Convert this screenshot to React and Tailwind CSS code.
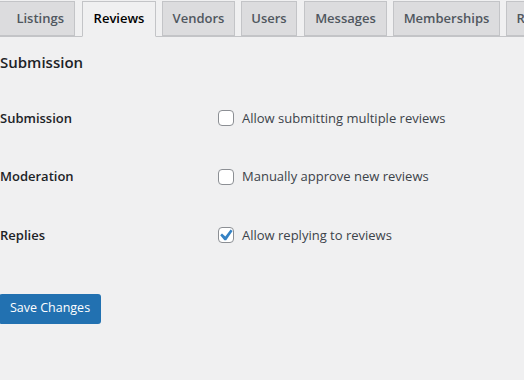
import React from "react";

const tabs = [
  { name: "Listings", ml: "ml-[-4px]", w: "w-[79px] justify-end pr-[10px]" },
  { name: "Reviews", ml: "ml-[7px]", w: "w-[74px] justify-center", active: true },
  { name: "Vendors", ml: "ml-[6px]", w: "w-[73px] justify-center" },
  { name: "Users", ml: "ml-[6px]", w: "w-[56px] justify-center" },
  { name: "Messages", ml: "ml-[7px]", w: "w-[83px] justify-center" },
  { name: "Memberships", ml: "ml-[6px]", w: "w-[107px] justify-center" },
  { name: "Reports", ml: "ml-[6px]", w: "w-[70px] justify-center" },
];

const rows = [
  { label: "Submission", text: "Allow submitting multiple reviews", checked: false },
  { label: "Moderation", text: "Manually approve new reviews", checked: false },
  { label: "Replies", text: "Allow replying to reviews", checked: true },
];

const Checkbox = ({ checked }) => (
  <span className="relative w-4 h-4 rounded-[4px] border border-[#8c8f94] bg-white shrink-0">
    {checked && (
      <svg className="absolute left-[-3px] top-[-3px]" width="20" height="20" viewBox="0 0 20 20">
        <path d="M14.6 4.6l2 1.4-6.4 9.2H8.4L4.2 10.2l1.8-1.6 3.3 2.9z" fill="#3582c4" />
      </svg>
    )}
  </span>
);

export default function App() {
  return (
    <div
      className="w-[524px] h-[380px] overflow-hidden bg-[#f0f0f1] text-[#1d2327]"
      style={{ fontFamily: '"Open Sans", "Noto Sans", sans-serif' }}
    >
      {/* Tabs */}
      <div className="pt-px border-b border-[#c3c4c7] h-[37px] flex whitespace-nowrap">
        {tabs.map((t) => (
          <div
            key={t.name}
            className={
              t.active
                ? `${t.ml} ${t.w} shrink-0 h-[36px] flex items-center border border-[#c3c4c7] border-b-[#f0f0f1] bg-[#f0f0f1] text-black text-[13px] font-semibold`
                : `${t.ml} ${t.w} shrink-0 h-[35px] flex items-center border border-[#c3c4c7] bg-[#dcdcde] text-[#50575e] text-[13px] font-semibold`
            }
          >
            {t.name}
          </div>
        ))}
      </div>

      <h2 className="text-[15px] font-semibold mt-[13px] leading-[24px]">Submission</h2>

      <div className="mt-[15px] flex flex-col">
        {rows.map((r) => (
          <div key={r.label} className="flex items-center h-[58.5px]">
            <div className="w-[218px] text-[13px] font-semibold">{r.label}</div>
            <label className="flex items-center gap-2 text-[13px] text-[#3c434a]">
              <Checkbox checked={r.checked} />
              {r.text}
            </label>
          </div>
        ))}
      </div>

      <button className="mt-[29px] ml-[-1px] h-[30px] w-[102px] rounded-[3px] bg-[#2271b1] text-white text-[12.5px]">
        Save Changes
      </button>
    </div>
  );
}
